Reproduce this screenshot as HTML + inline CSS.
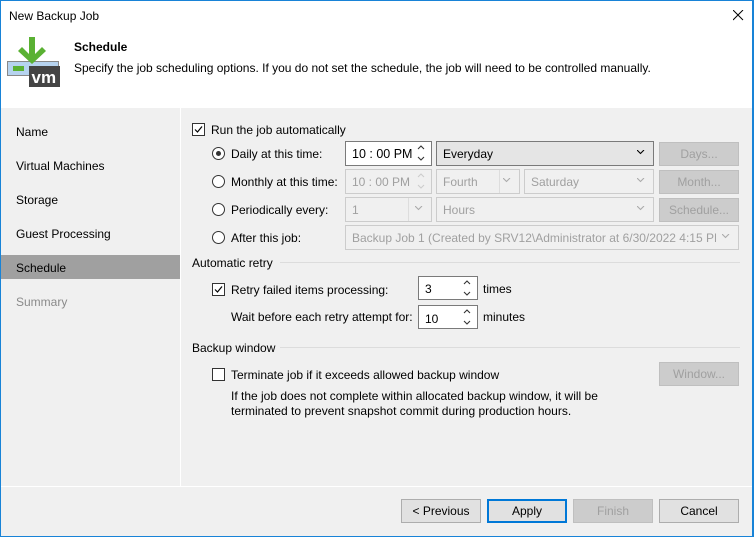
<!DOCTYPE html>
<html><head><style>
*{box-sizing:border-box;margin:0;padding:0}
body{width:754px;height:537px;position:relative;overflow:hidden;font-family:"Liberation Sans",sans-serif;font-size:12px;color:#000;background:#f0f0f0}
.a{position:absolute;white-space:nowrap}
.box{position:absolute;border:1px solid #7a7a7a;background:#fff;padding:3px 0 0 6px}
.dis{border-color:#ccc;background:#f0f0f0;color:#a0a0a0}
.btn{position:absolute;height:24px;border:1px solid #adadad;background:#e1e1e1;text-align:center;line-height:22px}
.bdis{border-color:#bfbfbf;background:#cccccc;color:#a0a0a0}
.cb{position:absolute;width:13px;height:13px;border:1px solid #333;background:#fff}
.rb{position:absolute;width:13px;height:13px;border:1px solid #333;border-radius:50%;background:#fff}
.sp{position:absolute;right:6px;top:3px}
.dd{position:absolute;right:8px;top:8px}
.grp{position:absolute;height:1px;background:#dcdcdc}
</style></head><body>
<div class="a" style="left:0;top:0;width:754px;height:108px;background:#fff"></div>
<div class="a" style="left:0;top:0;width:1px;height:537px;background:#1883d7"></div>
<div class="a" style="right:0;top:0;width:2px;height:537px;background:#1883d7"></div>
<div class="a" style="left:0;bottom:0;width:754px;height:1px;background:#1883d7"></div>
<div class="a" style="left:0;top:0;width:754px;height:1px;background:#1883d7"></div>
<div class="a" style="left:9px;top:9px;font-size:12px">New Backup Job</div>
<svg class="a" style="left:733px;top:10px" width="11" height="11"><path d="M0 0L10 10M10 0L0 10" stroke="#000" stroke-width="1"/></svg>
<svg class="a" style="left:6px;top:36px" width="56" height="52">
<rect x="1.5" y="25.5" width="51" height="14" fill="#b6d3ef" stroke="#888"/>
<rect x="7" y="30" width="11" height="5" fill="#5ab133"/>
<path d="M23 1h6v17l7-7 4 4-14 13-14-13 4-4 7 7z" fill="#5ab133"/>
<rect x="23" y="30" width="31" height="21" fill="#444"/>
<text x="25.5" y="47" font-family="Liberation Sans" font-weight="bold" font-size="17" fill="#fff">vm</text>
</svg>
<div class="a" style="left:74px;top:40px;font-weight:bold">Schedule</div>
<div class="a" style="left:74px;top:61px">Specify the job scheduling options. If you do not set the schedule, the job will need to be controlled manually.</div>
<div class="a" style="left:180px;top:108px;width:1px;height:379px;background:#fff"></div>
<div class="a" style="left:1px;top:486px;width:751px;height:1px;background:#fff"></div>
<div class="a" style="left:16px;top:125px">Name</div>
<div class="a" style="left:16px;top:159px">Virtual Machines</div>
<div class="a" style="left:16px;top:193px">Storage</div>
<div class="a" style="left:16px;top:227px">Guest Processing</div>
<div class="a" style="left:1px;top:255px;width:179px;height:24px;background:#a0a0a0"></div>
<div class="a" style="left:16px;top:261px">Schedule</div>
<div class="a" style="left:16px;top:295px;color:#8a8a8a">Summary</div>

<div class="cb" style="left:192px;top:123px"><svg width="11" height="11" style="position:absolute;left:0;top:0"><path d="M2 5.5L4.5 8L9 2.5" stroke="#000" fill="none" stroke-width="1.2"/></svg></div>
<div class="a" style="left:211px;top:123px">Run the job automatically</div>
<div class="rb" style="left:212px;top:147px"><div style="position:absolute;left:3px;top:3px;width:5px;height:5px;border-radius:50%;background:#333"></div></div>
<div class="a" style="left:231px;top:147px">Daily at this time:</div>
<div class="rb" style="left:212px;top:175px"></div>
<div class="a" style="left:231px;top:175px">Monthly at this time:</div>
<div class="rb" style="left:212px;top:203px"></div>
<div class="a" style="left:231px;top:203px">Periodically every:</div>
<div class="rb" style="left:212px;top:231px"></div>
<div class="a" style="left:231px;top:231px">After this job:</div>

<svg width="0" height="0" style="position:absolute"><defs>
<g id="spin"><path d="M1 4L4 1L7 4M1 12L4 15L7 12" fill="none" stroke-width="1.1"/></g>
<g id="chev"><path d="M0 0L3.5 3.5L7 0" fill="none" stroke-width="1.1"/></g>
</defs></svg>

<div class="box" style="left:345px;top:141px;width:87px;height:25px;font-size:12.5px;padding-top:5px">10 : 00 PM<svg class="sp" width="8" height="16"><use href="#spin" stroke="#333"/></svg></div>
<div class="box" style="left:436px;top:141px;width:218px;height:25px;background:#e5e5e5;padding-top:5px">Everyday<svg class="dd" width="8" height="5"><use href="#chev" stroke="#000" stroke-width="1.8"/></svg></div>
<div class="btn bdis" style="left:659px;top:142px;width:80px">Days...</div>

<div class="box dis" style="left:345px;top:169px;width:87px;height:25px;padding-top:5px">10 : 00 PM<svg class="sp" width="8" height="16"><use href="#spin" stroke="#ccc"/></svg></div>
<div class="box dis" style="left:436px;top:169px;width:84px;height:25px;padding-top:5px">Fourth<div style="position:absolute;left:62px;top:0;width:1px;height:23px;background:#ddd"></div><svg class="dd" width="8" height="5"><use href="#chev" stroke="#aaa"/></svg></div>
<div class="box dis" style="left:524px;top:169px;width:130px;height:25px;padding-top:5px">Saturday<svg class="dd" width="8" height="5"><use href="#chev" stroke="#aaa"/></svg></div>
<div class="btn bdis" style="left:659px;top:170px;width:80px">Month...</div>

<div class="box dis" style="left:345px;top:197px;width:87px;height:25px;padding-top:5px">1<div style="position:absolute;left:62px;top:0;width:1px;height:23px;background:#ddd"></div><svg class="dd" width="8" height="5"><use href="#chev" stroke="#aaa"/></svg></div>
<div class="box dis" style="left:436px;top:197px;width:218px;height:25px;padding-top:5px">Hours<svg class="dd" width="8" height="5"><use href="#chev" stroke="#aaa"/></svg></div>
<div class="btn bdis" style="left:659px;top:198px;width:80px">Schedule...</div>

<div class="box dis" style="left:345px;top:225px;width:394px;height:25px;padding-top:5px;overflow:hidden">Backup Job 1 (Created by SRV12\Administrator at 6/30/2022 4:15 PM<div style="position:absolute;right:0;top:0;width:22px;height:23px;background:#f0f0f0"></div><svg class="dd" width="8" height="5"><use href="#chev" stroke="#aaa"/></svg></div>

<div class="a" style="left:192px;top:256px">Automatic retry</div>
<div class="grp" style="left:280px;top:262px;width:460px"></div>
<div class="cb" style="left:212px;top:283px"><svg width="11" height="11" style="position:absolute;left:0;top:0"><path d="M2 5.5L4.5 8L9 2.5" stroke="#000" fill="none" stroke-width="1.2"/></svg></div>
<div class="a" style="left:231px;top:283px">Retry failed items processing:</div>
<div class="box" style="left:418px;top:276px;width:60px;height:24px;padding-top:5px">3<svg class="sp" width="8" height="16"><use href="#spin" stroke="#333"/></svg></div>
<div class="a" style="left:483px;top:282px">times</div>
<div class="a" style="left:231px;top:310px">Wait before each retry attempt for:</div>
<div class="box" style="left:418px;top:305px;width:60px;height:24px;padding-top:6px">10<svg class="sp" width="8" height="16"><use href="#spin" stroke="#333"/></svg></div>
<div class="a" style="left:483px;top:310px">minutes</div>

<div class="a" style="left:192px;top:341px">Backup window</div>
<div class="grp" style="left:280px;top:347px;width:460px"></div>
<div class="cb" style="left:212px;top:368px"></div>
<div class="a" style="left:231px;top:368px">Terminate job if it exceeds allowed backup window</div>
<div class="btn bdis" style="left:659px;top:362px;width:80px">Window...</div>
<div class="a" style="left:231px;top:389px;line-height:15px">If the job does not complete within allocated backup window, it will be<br>terminated to prevent snapshot commit during production hours.</div>

<div class="btn" style="left:401px;top:499px;width:80px">&lt; Previous</div>
<div class="btn" style="left:487px;top:499px;width:80px;border:2px solid #0078d7;line-height:20px">Apply</div>
<div class="btn bdis" style="left:573px;top:499px;width:80px">Finish</div>
<div class="btn" style="left:659px;top:499px;width:80px">Cancel</div>
</body></html>
